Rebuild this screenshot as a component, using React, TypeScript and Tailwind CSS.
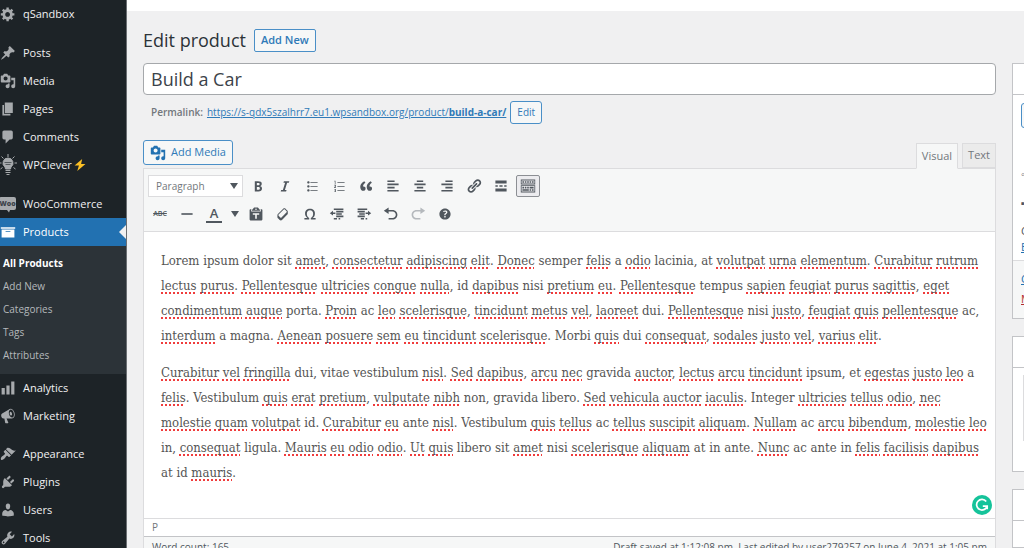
import { Fragment, useState } from "react";
import type { ReactNode } from "react";
import clsx from "clsx";

const icons = {
  generic:
    "M18 12h-2.18c-.17.7-.44 1.35-.81 1.93l1.54 1.54-2.1 2.1-1.54-1.54c-.58.36-1.23.63-1.91.79V19H8v-2.18c-.68-.16-1.33-.43-1.91-.79l-1.54 1.54-2.12-2.12 1.54-1.54c-.36-.58-.63-1.23-.79-1.91H1V9.03h2.17c.16-.7.44-1.35.8-1.94L2.43 5.55l2.1-2.1 1.54 1.54c.58-.37 1.24-.64 1.93-.81V2h3v2.18c.68.16 1.33.43 1.91.79l1.54-1.54 2.12 2.12-1.54 1.54c.36.59.64 1.24.8 1.94H18V12zm-8.5 1.5c1.66 0 3-1.34 3-3s-1.34-3-3-3-3 1.34-3 3 1.34 3 3 3z",
  pin: "M10.44 3.02l1.82-1.82 6.36 6.35-1.83 1.82c-1.05-.68-2.48-.57-3.41.36l-.75.75c-.92.93-1.04 2.35-.35 3.41l-1.83 1.82-2.41-2.41-2.8 2.79c-.42.42-3.38 2.71-3.8 2.29s1.86-3.39 2.28-3.81l2.79-2.79L4.1 9.36l1.83-1.82c1.05.69 2.48.57 3.4-.36l.75-.75c.93-.92 1.05-2.35.36-3.41z",
  media:
    "M13 11V4c0-.55-.45-1-1-1h-1.67L9 1H5L3.67 3H2c-.55 0-1 .45-1 1v7c0 .55.45 1 1 1h10c.55 0 1-.45 1-1zM7 4.5c1.38 0 2.5 1.12 2.5 2.5S8.38 9.5 7 9.5 4.5 8.38 4.5 7 5.62 4.5 7 4.5zM14 6h5v10.5c0 1.38-1.12 2.5-2.5 2.5S14 17.88 14 16.5s1.12-2.5 2.5-2.5c.17 0 .34.02.5.05V9h-3V6zm-4 8.05V13h2v3.5c0 1.38-1.12 2.5-2.5 2.5S7 17.88 7 16.5 8.12 14 9.5 14c.17 0 .34.02.5.05z",
  page: "M6 15V2h10v13H6zm-1 1h8v2H3V5h2v11z",
  comment:
    "M5 2h9c1.1 0 2 .9 2 2v7c0 1.1-.9 2-2 2h-2l-5 5v-5H5c-1.1 0-2-.9-2-2V4c0-1.1.9-2 2-2z",
  archive: "M19 4v2H1V4h18zM2 7h16v10H2V7zm11 3V9H7v1h6z",
  chart: "M18 18V2h-4v16h4zm-6 0V7H8v11h4zm-6 0v-8H2v8h4z",
  megaphone:
    "M18.15 5.94c.46 1.62.38 3.22-.02 4.48-.42 1.28-1.26 2.18-2.3 2.48-.16.06-.26.06-.4.06-.06.02-.12.02-.18.02-.06.02-.14.02-.22.02h-6.8l2.22 5.5c.02.14-.06.26-.14.34-.08.1-.24.16-.34.16H6.95c-.1 0-.26-.06-.34-.16-.08-.08-.16-.2-.14-.34l-1-5.5H4.25l-.02-.02c-.5.06-1.08-.18-1.54-.62s-.88-1.08-1.06-1.88c-.24-.8-.2-1.56-.02-2.2.18-.62.58-1.08 1.06-1.3l.02-.02 9-5.4c.1-.06.18-.1.24-.16.06-.04.14-.08.24-.12.16-.08.28-.12.5-.18 1.04-.3 2.24.1 3.22.98s1.84 2.24 2.26 3.86zm-2.58 5.98h-.02c.4-.1.74-.34 1.04-.7.58-.7.86-1.76.86-3.04 0-.64-.1-1.3-.28-1.98-.34-1.36-1.02-2.5-1.78-3.24s-1.68-1.1-2.46-.88c-.82.22-1.4.96-1.7 2-.32 1.04-.28 2.36.06 3.72.38 1.36 1 2.5 1.8 3.24.78.74 1.62 1.1 2.48.88zm-2.54-7.08c.22-.04.42-.02.62.04.38.16.76.48 1.02 1s.42 1.2.42 1.78c0 .3-.04.56-.12.8-.18.48-.44.84-.86.94-.34.1-.8-.06-1.14-.4s-.64-.86-.78-1.5c-.18-.62-.12-1.24.02-1.72s.48-.84.82-.94z",
  brush:
    "M14.48 11.06L7.41 3.99l1.5-1.5c.5-.56 2.3-.47 3.51.32 1.21.8 1.43 1.28 2.91 2.1 1.18.64 2.45 1.26 4.45.85zm-.71.71L6.7 4.7 4.93 6.47c-.39.39-.39 1.02 0 1.41l1.06 1.06c.39.39.39 1.03 0 1.42-.6.6-1.43 1.11-2.21 1.69-.35.26-.7.53-1.01.84C1.43 14.23.4 16.08 1.4 17.07c.99 1 2.84-.03 4.18-1.36.31-.31.58-.66.85-1.02.57-.78 1.08-1.61 1.69-2.21.39-.39 1.02-.39 1.41 0l1.06 1.06c.39.39 1.02.39 1.41 0z",
  plug: "M13.11 4.36L9.87 7.6 8 5.73l3.24-3.24c.35-.34 1.05-.2 1.56.32.52.51.66 1.21.31 1.55zm-8 1.77l.91-1.12 9.01 9.01-1.19.84c-.71.71-2.63 1.16-3.82 1.16H6.14L4.9 17.26c-.59.59-1.54.59-2.12 0-.59-.58-.59-1.53 0-2.12L4 13.88v-3.88c0-1.2.4-3.17 1.11-3.87zm7.26 3.97l3.24-3.24c.34-.35 1.04-.21 1.55.31.52.51.66 1.21.31 1.55l-3.24 3.25z",
  user: "M10 9.25c-2.27 0-2.73-3.44-2.73-3.44C7 4.02 7.82 2 9.97 2c2.16 0 2.98 2.02 2.71 3.81 0 0-.41 3.44-2.68 3.44zm0 2.57L12.72 10c2.39 0 4.52 2.33 4.52 4.53v2.49s-3.65 1.13-7.24 1.13c-3.65 0-7.24-1.13-7.24-1.13v-2.49c0-2.25 1.94-4.48 4.47-4.48z",
  wrench:
    "M16.68 9.77c-1.34 1.34-3.3 1.67-4.95.99l-5.41 6.52c-.99.99-2.59.99-3.58 0s-.99-2.59 0-3.57l6.52-5.42c-.68-1.65-.35-3.61.99-4.95 1.28-1.28 3.12-1.62 4.72-1.06l-2.89 2.89 2.82 2.82 2.86-2.87c.53 1.58.18 3.39-1.08 4.65zM3.81 16.21c.4.39 1.04.39 1.43 0 .4-.4.4-1.04 0-1.43-.39-.4-1.03-.4-1.43 0-.39.39-.39 1.03 0 1.43z",
  bold: "M6 4v13h4.54c1.37 0 2.46-.33 3.26-1 .8-.66 1.2-1.58 1.2-2.77 0-.84-.17-1.51-.51-2.01s-.9-.85-1.67-1.03v-.09c.57-.1 1.02-.4 1.36-.9s.51-1.13.51-1.91c0-1.14-.39-1.98-1.17-2.5C12.75 4.26 11.5 4 9.78 4H6zm2.57 5.15V6.26h1.36c.73 0 1.27.11 1.61.32.34.22.51.58.51 1.07 0 .54-.16.92-.47 1.15s-.82.35-1.51.35h-1.5zm0 2.19h1.6c1.44 0 2.16.53 2.16 1.61 0 .6-.17 1.05-.51 1.34s-.86.43-1.57.43H8.57v-3.38z",
  italic: "M14.78 6h-2.13l-2.8 9h2.12l-.62 2H4.6l.62-2h2.14l2.8-9H8.03l.62-2h6.75z",
  ul: "M5.5 7C4.67 7 4 6.33 4 5.5 4 4.68 4.67 4 5.5 4 6.32 4 7 4.68 7 5.5 7 6.33 6.32 7 5.5 7zM8 5h9v1H8V5zm-2.5 7c-.83 0-1.5-.67-1.5-1.5C4 9.68 4.67 9 5.5 9c.82 0 1.5.68 1.5 1.5 0 .83-.68 1.5-1.5 1.5zM8 10h9v1H8v-1zm-2.5 7c-.83 0-1.5-.67-1.5-1.5 0-.82.67-1.5 1.5-1.5.82 0 1.5.68 1.5 1.5 0 .83-.68 1.5-1.5 1.5zM8 15h9v1H8v-1z",
  ol: "M8 5h9v1H8V5zM8 10h9v1H8v-1zM8 15h9v1H8v-1zM4.2 3.4H5.6V7.4H4.8V4.3H4.2zM4 8.5H6.2V10.6L5 11.6H6.2V12.4H4V11.4L5.3 10.2V9.3H4zM4 13.6H6.2V17.6H4V16.8H5.4V16H4.5V15.2H5.4V14.4H4z",
  quote:
    "M9.49 13.22c0-.74-.2-1.38-.61-1.9-.62-.78-1.83-.88-2.53-.72-.29-1.65 1.11-3.75 2.92-4.65L7.88 4c-2.73 1.3-5.42 4.28-4.96 8.05C3.21 14.43 4.59 16 6.54 16c.85 0 1.56-.25 2.12-.75s.83-1.18.83-2.03zm8.05 0c0-.74-.2-1.38-.61-1.9-.63-.78-1.83-.88-2.53-.72-.29-1.65 1.11-3.75 2.92-4.65L15.93 4c-2.73 1.3-5.41 4.28-4.95 8.05.29 2.38 1.66 3.95 3.61 3.95.85 0 1.56-.25 2.12-.75s.83-1.18.83-2.03z",
  alignLeft: "M12 5V3H3v2h9zm5 4V7H3v2h14zm-5 4v-2H3v2h9zm5 4v-2H3v2h14z",
  alignCenter: "M14 5V3H6v2h8zm3 4V7H3v2h14zm-3 4v-2H6v2h8zm3 4v-2H3v2h14z",
  alignRight: "M17 5V3H8v2h9zm0 4V7H3v2h14zm0 4v-2H8v2h9zm0 4v-2H3v2h14z",
  link: "M17.74 2.76c1.68 1.69 1.68 4.41 0 6.1l-1.53 1.52c-1.12 1.12-2.7 1.47-4.14 1.09l2.62-2.61.76-.77.76-.76c.84-.84.84-2.2 0-3.04-.84-.85-2.2-.85-3.04 0l-.77.76-3.38 3.38c-.37-1.44-.02-3.02 1.1-4.14l1.52-1.53c1.69-1.68 4.42-1.68 6.1 0zM8.59 13.43l5.34-5.34c.42-.42.42-1.1 0-1.52-.44-.43-1.13-.39-1.53 0l-5.33 5.34c-.42.42-.42 1.1 0 1.52.44.43 1.13.39 1.52 0zm-.76 2.29l4.14-4.15c.38 1.44.03 3.02-1.09 4.14l-1.52 1.53c-1.69 1.68-4.41 1.68-6.1 0-1.68-1.68-1.68-4.42 0-6.1l1.53-1.52c1.12-1.12 2.7-1.47 4.14-1.1l-4.14 4.15c-.85.84-.85 2.2 0 3.05.84.84 2.2.84 3.04 0z",
  more: "M17 7V3H3v4h14zM6 11V9H3v2h3zm6 0V9H8v2h4zm5 0V9h-3v2h3zm0 6v-4H3v4h14z",
  kitchenSink:
    "M19 2v6H1V2h18zm-1 5V3H2v4h16zM5 4v2H3V4h2zm3 0v2H6V4h2zm3 0v2H9V4h2zm3 0v2h-2V4h2zm3 0v2h-2V4h2zm2 5v9H1V9h18zm-1 8v-7H2v7h16zM5 11v2H3v-2h2zm3 0v2H6v-2h2zm3 0v2H9v-2h2zm6 0v2h-5v-2h5zm-6 3v2H3v-2h8zm3 0v2h-2v-2h2zm3 0v2h-2v-2h2z",
  hr: "M3 9h14v2H3z",
  paste:
    "M12.38 2L15 5v1H5V5l2.64-3h4.74zM10 5c.55 0 1-.44 1-1 0-.55-.45-1-1-1s-1 .45-1 1c0 .56.45 1 1 1zm5.45-1H17c.55 0 1 .45 1 1v12c0 .56-.45 1-1 1H3c-.55 0-1-.44-1-1V5c0-.55.45-1 1-1h1.55L4 4.63V7h12V4.63zM14 11V9H6v2h3v5h2v-5h3z",
  eraser:
    "M14.29 4.59l1.1 1.11c.41.4.61.94.61 1.47v2.12c0 .53-.2 1.07-.61 1.47l-6.63 6.63c-.4.41-.94.61-1.47.61s-1.07-.2-1.47-.61l-1.11-1.1-1.1-1.11c-.41-.4-.61-.94-.61-1.47v-2.12c0-.54.2-1.07.61-1.48l6.63-6.62c.4-.41.94-.61 1.47-.61s1.06.2 1.47.61zm-6.21 9.7l6.42-6.42c.39-.39.39-1.03 0-1.43L12.36 4.3c-.19-.19-.45-.29-.72-.29s-.52.1-.71.29l-6.42 6.42c-.39.4-.39 1.04 0 1.43l2.14 2.14c.38.38 1.04.38 1.43 0z",
  omega:
    "M10 5.4c1.27 0 2.24.36 2.91 1.08.66.71 1 1.76 1 3.13 0 1.28-.23 2.37-.69 3.27-.47.89-1.27 1.52-2.22 2.12v2h6v-2h-3.69c.92-.64 1.62-1.34 2.12-2.34.49-1.01.74-2.13.74-3.35 0-1.78-.55-3.19-1.65-4.22S11.92 3.54 10 3.54s-3.43.53-4.52 1.57c-1.1 1.04-1.65 2.44-1.65 4.2 0 1.21.24 2.31.73 3.33.48 1.01 1.19 1.71 2.1 2.36H3v2h6v-2c-.98-.64-1.8-1.28-2.24-2.17-.45-.89-.67-1.96-.67-3.22 0-1.37.33-2.41 1-3.13C7.75 5.76 8.72 5.4 10 5.4z",
  outdent:
    "M6 3h12v2H6zM9 6h9v2H9zM9 9h7v2H9zM9 12h9v2H9zM6 15h4v2H6zM12 15h2v2h-2zM5 6v2h3v2H5v2L1 9z",
  indent:
    "M2 3h12v2H2zM2 6h9v2H2zM4 9h7v2H4zM2 12h9v2H2zM6 15h4v2H6zM12 15h2v2h-2zM15 6v2h-3v2h3v2l4-3z",
  undo: "M12 5H7V2L1 6l6 4V7h5c2.2 0 4 1.8 4 4s-1.8 4-4 4H7v2h5c3.3 0 6-2.7 6-6s-2.7-6-6-6z",
  redo: "M8 5h5V2l6 4-6 4V7H8c-2.2 0-4 1.8-4 4s1.8 4 4 4h5v2H8c-3.3 0-6-2.7-6-6s2.7-6 6-6z",
  help: "M17 10c0-3.87-3.14-7-7-7-3.87 0-7 3.13-7 7s3.13 7 7 7c3.86 0 7-3.13 7-7zm-6.3 1.48H9.14v-.43c0-.38.08-.7.24-.98s.46-.57.88-.89c.41-.29.68-.53.81-.71.14-.18.2-.39.2-.62 0-.25-.09-.44-.28-.58-.19-.13-.45-.19-.79-.19-.58 0-1.25.19-2 .57l-.64-1.28c.87-.49 1.8-.74 2.77-.74.81 0 1.45.2 1.92.58.48.39.71.91.71 1.55 0 .43-.09.8-.29 1.11-.19.32-.57.67-1.11 1.06-.38.28-.61.49-.71.63-.1.15-.15.34-.15.57v.35zm-1.47 2.74c-.18-.17-.27-.42-.27-.73 0-.33.08-.58.26-.75s.43-.25.77-.25c.32 0 .57.09.75.26s.27.42.27.74c0 .3-.09.55-.27.72-.18.18-.43.27-.75.27-.33 0-.58-.09-.76-.26z",
};

type IconName = keyof typeof icons;

const Icon = ({ name, className = "size-4" }: { name: IconName; className?: string }) => (
  <svg viewBox="0 0 20 20" fill="currentColor" className={clsx("shrink-0", className)} aria-hidden="true">
    <path d={icons[name]} fillRule="evenodd" />
  </svg>
);

const Bulb = () => (
  <svg viewBox="0 0 18 22" className="h-[22px] w-[18px] shrink-0" fill="none" stroke="currentColor" aria-hidden="true">
    <path d="M8 0v3M1.500 2.500l2 2M14.500 2.500l-2 2M0 9h1.500M14.500 9H17M.5 15l2-1.500M15.500 15l-2-1.500" />
    <path d="M8 4a5 5 0 0 0-3 9l.5 2h5l.5-2A5 5 0 0 0 8 4z" fill="currentColor" />
    <path d="M5.500 16.500h5M5.500 18.500h5M6.500 20.500h3" />
    <path d="M4.500 8.500h7M5.500 10.500h5" stroke="#1d2327" strokeWidth=".6" />
  </svg>
);

const Woo = () => (
  <svg viewBox="0 0 17 17" className="size-[17px] shrink-0" aria-hidden="true">
    <path d="M1 1h13q2 0 2 2v9q0 2-2 2h-4l-1 2.500L7 14H1q-2 0-2-2V3q0-2 2-2z" fill="#a7aaad" />
    <text x="7.500" y="10" textAnchor="middle" fontSize="7" fontWeight="800" fontFamily="Open Sans" fill="#3c434a">
      Woo
    </text>
  </svg>
);

const MenuItem = ({ icon, children }: { icon: ReactNode; children: ReactNode }) => (
  <li>
    <a href="#" className="flex h-7 items-center text-[11px] text-[#f0f0f1]">
      <span className="flex w-[23px] shrink-0 text-[#a7aaad]">{icon}</span>
      {children}
    </a>
  </li>
);

const subMenu = ["All Products", "Add New", "Categories", "Tags", "Attributes"];

const SideMenu = () => (
  <nav className="w-[127px] shrink-0 overflow-hidden border-r border-[#6b6f73] bg-[#1d2327]">
    <ul>
      <MenuItem icon={<Icon name="generic" />}>qSandbox</MenuItem>
    </ul>
    <ul className="mt-[11px]">
      <MenuItem icon={<Icon name="pin" />}>Posts</MenuItem>
      <MenuItem icon={<Icon name="media" />}>Media</MenuItem>
      <MenuItem icon={<Icon name="page" />}>Pages</MenuItem>
      <MenuItem icon={<Icon name="comment" />}>Comments</MenuItem>
      <MenuItem icon={<Bulb />}>
        WPClever
        <svg viewBox="0 0 11 11" className="ml-[2px] size-3" aria-hidden="true">
          <path d="M7.500 0L.5 6h4L3 11l7.500-6.500h-4z" fill="#fbbf24" />
        </svg>
      </MenuItem>
    </ul>
    <ul className="mt-[11px]">
      <MenuItem icon={<Woo />}>WooCommerce</MenuItem>
      <li>
        <a href="#" className="flex h-7 items-center bg-[#2271b1] text-[11px] text-white">
          <span className="w-[23px] shrink-0">
            <Icon name="archive" />
          </span>
          Products
          <span className="ml-auto size-0 border-y-[7px] border-r-[7px] border-y-transparent border-r-[#f0f0f1]" />
        </a>
        <ul className="bg-[#2c3338] pt-[6px] pb-[7px]">
          {subMenu.map((item, i) => (
            <li key={item}>
              <a
                href="#"
                className={clsx(
                  "flex h-[23px] items-center pl-[3px] text-[10px]",
                  i === 0 ? "font-bold text-white" : "text-[#b5b9bc]"
                )}
              >
                {item}
              </a>
            </li>
          ))}
        </ul>
      </li>
      <MenuItem icon={<Icon name="chart" />}>Analytics</MenuItem>
      <MenuItem icon={<Icon name="megaphone" />}>Marketing</MenuItem>
    </ul>
    <ul className="mt-[10px]">
      <MenuItem icon={<Icon name="brush" />}>Appearance</MenuItem>
      <MenuItem icon={<Icon name="plug" />}>Plugins</MenuItem>
      <MenuItem icon={<Icon name="user" />}>Users</MenuItem>
      <MenuItem icon={<Icon name="wrench" />}>Tools</MenuItem>
    </ul>
  </nav>
);

const ToolButton = ({ label, active, children }: { label: string; active?: boolean; children: ReactNode }) => (
  <button
    type="button"
    aria-label={label}
    className={clsx(
      "flex h-[22px] w-6 items-center justify-center rounded-[2px] border text-[#50575e]",
      active ? "border-[#8c8f94] bg-[#ececef]" : "border-transparent"
    )}
  >
    {children}
  </button>
);

const topRow: [IconName, string][] = [
  ["bold", "Bold"],
  ["italic", "Italic"],
  ["ul", "Bulleted list"],
  ["ol", "Numbered list"],
  ["quote", "Blockquote"],
  ["alignLeft", "Align left"],
  ["alignCenter", "Align center"],
  ["alignRight", "Align right"],
  ["link", "Insert link"],
  ["more", "Read more"],
];

const bottomRow: [IconName, string][] = [
  ["paste", "Paste as text"],
  ["eraser", "Clear formatting"],
  ["omega", "Special character"],
  ["outdent", "Decrease indent"],
  ["indent", "Increase indent"],
  ["undo", "Undo"],
];

const Toolbar = () => (
  <div className="flex h-[63px] flex-col gap-[6px] border-b border-[#dcdcde] bg-[#f6f7f7] px-1 pt-[6px]">
    <div className="flex items-center gap-[3px]">
      <div className="relative">
        <select
          aria-label="Block format"
          className="block h-[22px] w-[95px] appearance-none border border-[#dcdcde] bg-white pl-[7px] text-[10px] text-[#72777c]"
        >
          <option>Paragraph</option>
        </select>
        <span className="pointer-events-none absolute top-[8px] right-[5px] border-x-4 border-t-[6px] border-x-transparent border-t-[#50575e]" />
      </div>
      {topRow.map(([name, label]) => (
        <ToolButton key={name} label={label}>
          <Icon name={name} />
        </ToolButton>
      ))}
      <ToolButton label="Toolbar toggle" active>
        <Icon name="kitchenSink" />
      </ToolButton>
    </div>
    <div className="flex items-center gap-[3px]">
      <ToolButton label="Strikethrough">
        <span className="text-[7px] font-semibold line-through">ABC</span>
      </ToolButton>
      <ToolButton label="Horizontal line">
        <Icon name="hr" />
      </ToolButton>
      <ToolButton label="Text color">
        <span className="w-4 border-b-2 border-[#50575e] text-[13px] leading-[15px] font-semibold">A</span>
      </ToolButton>
      <button type="button" aria-label="More text colors" className="flex h-[22px] w-3 items-center justify-center">
        <span className="border-x-4 border-t-[6px] border-x-transparent border-t-[#50575e]" />
      </button>
      {bottomRow.map(([name, label]) => (
        <ToolButton key={name} label={label}>
          <Icon name={name} />
        </ToolButton>
      ))}
      <ToolButton label="Redo">
        <Icon name="redo" className="size-4 text-[#b5b9bd]" />
      </ToolButton>
      <ToolButton label="Keyboard shortcuts">
        <Icon name="help" />
      </ToolButton>
    </div>
  </div>
);

const paragraphs = [
  [
    "Lorem ipsum dolor sit amet, consectetur adipiscing elit. Donec semper felis a odio lacinia, at volutpat urna elementum. Curabitur rutrum",
    "lectus purus. Pellentesque ultricies congue nulla, id dapibus nisi pretium eu. Pellentesque tempus sapien feugiat purus sagittis, eget",
    "condimentum augue porta. Proin ac leo scelerisque, tincidunt metus vel, laoreet dui. Pellentesque nisi justo, feugiat quis pellentesque ac,",
    "interdum a magna. Aenean posuere sem eu tincidunt scelerisque. Morbi quis dui consequat, sodales justo vel, varius elit.",
  ],
  [
    "Curabitur vel fringilla dui, vitae vestibulum nisl. Sed dapibus, arcu nec gravida auctor, lectus arcu tincidunt ipsum, et egestas justo leo a",
    "felis. Vestibulum quis erat pretium, vulputate nibh non, gravida libero. Sed vehicula auctor iaculis. Integer ultricies tellus odio, nec",
    "molestie quam volutpat id. Curabitur eu ante nisl. Vestibulum quis tellus ac tellus suscipit aliquam. Nullam ac arcu bibendum, molestie leo",
    "in, consequat ligula. Mauris eu odio odio. Ut quis libero sit amet nisi scelerisque aliquam at in ante. Nunc ac ante in felis facilisis dapibus",
    "at id mauris.",
  ],
];

// words the spell checker accepts, everything else gets the red underline
const dictionary = new Set(
  "lorem ipsum dolor sit semper a lacinia at id nisi tempus porta ac dui magna morbi vitae gravida et non libero integer ante in ligula vestibulum".split(" ")
);

const SpellChecked = ({ text }: { text: string }) => (
  <>
    {text.split(/([A-Za-z]+)/).map((part, i) =>
      /^[A-Za-z]/.test(part) && !dictionary.has(part.toLowerCase()) ? (
        <span key={i} className="underline decoration-[#f03c3c] decoration-dotted decoration-2 underline-offset-2 [text-decoration-skip-ink:none]">
          {part}
        </span>
      ) : (
        <Fragment key={i}>{part}</Fragment>
      )
    )}
  </>
);

const Editor = () => {
  const [tab, setTab] = useState("Visual");
  return (
    <section className="mt-4">
      <div className="flex items-end justify-between">
        <button
          type="button"
          className="mb-[3px] flex h-[25px] items-center gap-[5px] rounded-[3px] border border-[#4a8fc7] bg-[#f6f7f7] px-[6px] text-[11px] text-[#2f7ab8]"
        >
          <Icon name="media" className="size-4 text-[#2271b1]" />
          Add Media
        </button>
        <div className="flex gap-1">
          {["Visual", "Text"].map((name) => (
            <button
              key={name}
              type="button"
              onClick={() => setTab(name)}
              className={clsx(
                "relative border border-[#dcdcde] px-[5px] text-[11px] text-[#72777c]",
                tab === name ? "-mb-px h-[26px] border-b-[#f6f7f7] bg-[#f6f7f7]" : "h-[25px] bg-[#ebebeb]"
              )}
            >
              {name}
            </button>
          ))}
        </div>
      </div>
      <div className="border border-[#dcdcde] bg-white">
        <Toolbar />
        <div className="relative h-[286px] px-[17px] pt-4 font-['DejaVu_Serif_Condensed','DejaVu_Serif',serif] text-[13px] leading-[25px] text-[#555]">
          {paragraphs.map((lines, i) => (
            <p key={i} className="mb-3">
              {lines.map((line) => (
                <span key={line} className="block whitespace-nowrap">
                  <SpellChecked text={line} />
                </span>
              ))}
            </p>
          ))}
          <button type="button" aria-label="Writing assistant" className="absolute right-[3px] bottom-[3px]">
            <svg viewBox="0 0 20 20" className="size-5">
              <circle cx="10" cy="10" r="10" fill="#15c39a" />
              <path d="M14.200 6.600A5.300 5.300 0 1 0 15 11.200H10.800M15.200 11v3.300" fill="none" stroke="#fff" strokeWidth="1.700" />
            </svg>
          </button>
        </div>
        <div className="flex h-[18px] items-center border-t border-[#dcdcde] px-2 text-[10px] text-[#72777c]">P</div>
        <div className="flex justify-between border-t border-[#c3c4c7] bg-[#f6f7f7] px-2 py-[2px] text-[10px] leading-4 whitespace-nowrap text-[#50575e]">
          <span>Word count: 165</span>
          <span>Draft saved at 1:12:08 pm. Last edited by user279257 on June 4, 2021 at 1:05 pm</span>
        </div>
      </div>
    </section>
  );
};

// the meta boxes run past the right edge of the window
const MetaBoxes = () => (
  <aside className="mt-[63px] flex w-3 shrink-0 flex-col gap-[17px] overflow-hidden whitespace-nowrap text-[11px] text-[#50575e]">
    <div className="h-[256px] w-60 border border-[#c3c4c7] bg-white">
      <div className="h-[31px] border-b border-[#c3c4c7]" />
      <div className="h-[165px] pt-2 pl-2">
        <button type="button" className="block h-[25px] rounded-[3px] border border-[#4a8fc7] bg-[#f6f7f7] px-2 text-[#2271b1]">
          Save Draft
        </button>
        <p className="mt-[38px]">◦ Status: Draft</p>
        <p className="mt-3">▪ Visibility: Public</p>
        <p className="mt-3 leading-4">Catalog visibility: Shop and search results</p>
        <a href="#" className="block leading-4 text-[#2271b1] underline">
          Edit
        </a>
      </div>
      <div className="h-[58px] border-t border-[#dcdcde] bg-[#f6f7f7] pt-2 pl-2 leading-5">
        <a href="#" className="block text-[#2271b1] underline">
          Copy to a new draft
        </a>
        <a href="#" className="block text-[#b32d2e] underline">
          Move to Trash
        </a>
      </div>
    </div>
    <div className="h-[147px] w-60 border border-[#c3c4c7] bg-white">
      <div className="h-[31px] border-b border-[#c3c4c7]" />
      <div className="mt-[7px] ml-[10px] h-[66px] border border-[#dcdcde]" />
    </div>
    <div className="h-16 w-60 border border-[#c3c4c7] bg-white">
      <div className="h-[31px] border-b border-[#c3c4c7]" />
    </div>
  </aside>
);

const App = () => (
  <div className="flex h-screen overflow-hidden bg-[#f0f0f1] font-['Open_Sans','Noto_Sans',sans-serif]">
    <SideMenu />
    <div className="flex min-w-0 flex-1 flex-col">
      <div className="h-[11px] shrink-0 bg-white" />
      <div className="-mt-[11px] flex min-h-0 flex-1 gap-4 pl-4">
        <main className="min-w-0 flex-1 pt-7">
          <div className="flex items-center gap-2">
            <h1 className="text-[18px] leading-6 text-[#2c3338]">Edit product</h1>
            <a
              href="#"
              className="flex h-[23px] items-center rounded-[2px] border border-[#4a8fc7] bg-[#f6f7f7] px-[6px] text-[11px] font-semibold text-[#2f7ab8]"
            >
              Add New
            </a>
          </div>
          <input
            aria-label="Product name"
            defaultValue="Build a Car"
            className="mt-[11px] block h-8 w-full rounded-[4px] border border-[#a5a8ab] bg-white px-[7px] text-[18px] text-[#3c434a]"
          />
          <div className="mt-[6px] flex items-center gap-1 pl-2 text-[10px] text-[#72777c]">
            <span className="font-semibold">Permalink:</span>
            <a href="#" className="text-[#2f7ab8] underline">
              https://s-qdx5szalhrr7.eu1.wpsandbox.org/product/<b className="font-bold">build-a-car/</b>
            </a>
            <button type="button" className="h-[23px] rounded-[3px] border border-[#4a8fc7] bg-[#f6f7f7] px-[6px] text-[10px] text-[#2f7ab8]">
              Edit
            </button>
          </div>
          <Editor />
        </main>
        <MetaBoxes />
      </div>
    </div>
  </div>
);

export default App;
